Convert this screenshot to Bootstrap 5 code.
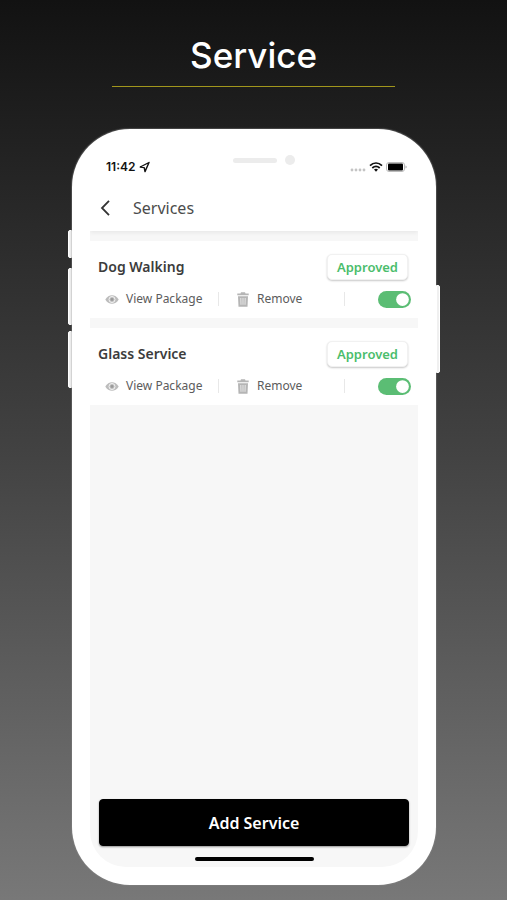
<!DOCTYPE html>
<html lang="en">
<head>
<meta charset="utf-8">
<meta name="viewport" content="width=device-width, initial-scale=1">
<title>Services</title>
<link href="https://cdn.jsdelivr.net/npm/bootstrap@5.3.0/dist/css/bootstrap.min.css" rel="stylesheet">
<style>
body { font-family: "Noto Sans", "Liberation Sans", sans-serif; background: linear-gradient(#121212, #424242 50%, #787878); color: #444; }
.page-title { font-family: Inter, "Liberation Sans", sans-serif; font-size: 35px; line-height: 44px; font-weight: 500; }
.title-block { padding: 33px 0 42px; }
.title-inner { width: 56%; padding-bottom: 9px; border-bottom: 1px solid #a1961c; }
.device { margin: 0 67px 15px 68px; }
.rail { width: 4px; }
.rail span { background: #f0f0f0; border: 1px solid #fff; }
.rail-left { padding-top: 101px; }
.rail-right { padding-top: 156px; }
.key-s { height: 28px; margin-bottom: 10px; border-radius: 2px 0 0 2px; }
.key-l { height: 57px; margin-bottom: 6px; border-radius: 2px 0 0 2px; }
.key-r { height: 88px; border-radius: 0 2px 2px 0; }
.shell { background: #fff; border-radius: 58px; padding: 18px; box-shadow: 0 0 1px 1px #8886; min-width: 0; }
.screen { background: #f7f7f7; border-radius: 0 0 36px 36px; }
.top-area { background: #fff; box-shadow: 0 2px 4px #0000000f; clip-path: inset(0 0 -10px 0); }
.status { display: grid; grid-template-columns: 1fr auto 1fr; padding: 8px 11px 0 16px; height: 38px; }
.clock { font-family: Inter, "Liberation Sans", sans-serif; font-size: 12px; line-height: 16px; font-weight: 600; color: #111; padding-top: 4px; }
.notch { margin-left: 15px; height: 10px; }
.speaker { width: 44px; height: 5px; border-radius: 3px; background: #ececec; }
.lens { width: 10px; height: 10px; border-radius: 50%; background: #ececec; }
.signals { height: 16px; margin-top: 4px; }
.app-bar { height: 46px; padding-left: 9px; gap: 20px; }
.app-title { font-size: 16px; line-height: 20px; color: #4c4c4c; }
.services { padding-top: 10px; gap: 10px; }
.service { background: #fff; height: 77px; padding: 13px 7px 0 8px; }
.service-name { font-size: 14px; line-height: 20px; font-weight: 600; color: #3c3c3c; }
.approved { width: 81px; height: 26px; margin-right: 3px; border-radius: 5px; font-size: 13px; line-height: 24px; font-weight: 600; color: #4bbd6c; background: #fff; border: 1px solid #f1f1f1; box-shadow: 0 1px 2px #00000038; }
.actions { height: 14px; margin-top: 12px; }
.action { font-size: 12px; line-height: 14px; color: #5c5c5c; background: none; border-right: 1px solid #e8e8e8 !important; height: 14px; }
.view { width: 121px; padding: 0 0 0 7px; gap: 7px; }
.trash { width: 126px; padding: 0 0 0 18px; gap: 8px; }
.form-switch.toggle-wrap { min-height: 0; }
.form-switch .toggle { width: 33px; height: 17px; margin: 0; border: 0; display: block; }
.form-switch .toggle:checked { background-color: #5bbd74; }
.footer-area { padding: 0 9px 6px; }
.add { height: 47px; border-radius: 4px; font-size: 16px; line-height: 20px; font-weight: 600; box-shadow: 0 1px 2px #0006; --bs-btn-bg: #000; --bs-btn-border-color: #000; }
.home-bar { width: 119px; height: 4px; border-radius: 2px; background: #000; margin-top: 11px; }
</style>
<script src="https://cdn.jsdelivr.net/npm/bootstrap@5.3.0/dist/js/bootstrap.bundle.min.js"></script>
</head>
<body class="min-vh-100 d-flex flex-column">
<header class="title-block">
  <div class="title-inner mx-auto text-center"><h1 class="page-title text-white m-0">Service</h1></div>
</header>
<main class="device d-flex flex-grow-1">
  <div class="rail rail-left d-flex flex-column"><span class="key-s"></span><span class="key-l"></span><span class="key-l"></span></div>
  <div class="shell flex-grow-1 d-flex flex-column">
    <div class="screen flex-grow-1 d-flex flex-column">
      <div class="top-area">
        <div class="status">
          <div class="clock d-flex">11:42
            <svg class="ms-1" width="11" height="16" viewBox="0 0 11 16" fill="none" stroke="#111" stroke-width="1.4" stroke-linejoin="round" aria-hidden="true"><path d="M10 3.500 1.200 8 5.200 8.600 6 12.600z"/></svg>
          </div>
          <div class="notch d-flex align-items-center"><span class="speaker"></span><span class="lens ms-2"></span></div>
          <div class="signals d-flex justify-content-end align-items-center">
            <svg width="57" height="12" viewBox="0 0 57 12" aria-hidden="true">
              <g fill="#c4c4c4"><circle cx="2" cy="9" r="1.400"/><circle cx="6" cy="9" r="1.400"/><circle cx="10" cy="9" r="1.400"/><circle cx="14" cy="9" r="1.400"/></g>
              <g fill="none" stroke="#111" stroke-width="1.800"><path d="M20 4.600c3.600-3.300 8.400-3.300 12 0M22.300 7c2.200-2 5.200-2 7.400 0"/></g>
              <path d="M24 8.500c1.200-1 2.800-1 4 0l-2 2.200z" fill="#111"/>
              <rect x="36.500" y="1.500" width="18" height="9" rx="2.500" fill="none" stroke="#bbb"/><rect x="38" y="2.500" width="15" height="7" rx="1" fill="#000"/><path d="M55.500 4.500c1.500.5 1.500 2.500 0 3z" fill="#aaa"/>
            </svg>
          </div>
        </div>
        <div class="app-bar d-flex align-items-center">
          <button class="btn p-0 border-0 d-flex" type="button" aria-label="Back"><svg width="14" height="16" viewBox="0 0 14 16" fill="none" stroke="#333" stroke-width="1.800"><path d="M10 .8 3 8l7 7.200"/></svg></button>
          <h2 class="app-title fw-normal m-0">Services</h2>
        </div>
      </div>
      <div class="services d-flex flex-column">
        <section class="service">
          <div class="d-flex justify-content-between align-items-center"><h3 class="service-name m-0">Dog Walking</h3><span class="approved text-center">Approved</span></div>
          <div class="actions d-flex align-items-center">
            <button type="button" class="action view border-0 d-flex align-items-center"><svg width="14" height="11" viewBox="0 0 14 11" aria-hidden="true"><path d="M.3 5.500C3.500-.3 10.500-.3 13.700 5.500 10.500 11.300 3.500 11.300.3 5.500z" fill="#bcbcbc"/><circle cx="7" cy="5.500" r="3" fill="#bcbcbc" stroke="#f4f4f4"/><circle cx="7" cy="5.500" r="1.400" fill="#999"/></svg>View Package</button>
            <button type="button" class="action trash border-0 d-flex align-items-center"><svg width="12" height="15" viewBox="0 0 12 15" fill="#b5b5b5" aria-hidden="true"><path d="M.3 1.500h3.200L4 .3h4l.5 1.200h3.200v1.700H.3zM1 4.200h10l-.5 10.500h-9z"/><path d="M3.800 6l.2 6.800M6 6v6.800M8.200 6 8 12.800" stroke="#eee" stroke-width=".9"/></svg>Remove</button>
            <div class="form-check form-switch toggle-wrap p-0 m-0 ms-auto"><input class="form-check-input toggle float-none" type="checkbox" role="switch" aria-label="Dog Walking enabled" checked></div>
          </div>
        </section>
        <section class="service">
          <div class="d-flex justify-content-between align-items-center"><h3 class="service-name m-0">Glass Service</h3><span class="approved text-center">Approved</span></div>
          <div class="actions d-flex align-items-center">
            <button type="button" class="action view border-0 d-flex align-items-center"><svg width="14" height="11" viewBox="0 0 14 11" aria-hidden="true"><path d="M.3 5.500C3.500-.3 10.500-.3 13.700 5.500 10.500 11.300 3.500 11.300.3 5.500z" fill="#bcbcbc"/><circle cx="7" cy="5.500" r="3" fill="#bcbcbc" stroke="#f4f4f4"/><circle cx="7" cy="5.500" r="1.400" fill="#999"/></svg>View Package</button>
            <button type="button" class="action trash border-0 d-flex align-items-center"><svg width="12" height="15" viewBox="0 0 12 15" fill="#b5b5b5" aria-hidden="true"><path d="M.3 1.500h3.200L4 .3h4l.5 1.200h3.200v1.700H.3zM1 4.200h10l-.5 10.500h-9z"/><path d="M3.800 6l.2 6.800M6 6v6.800M8.200 6 8 12.800" stroke="#eee" stroke-width=".9"/></svg>Remove</button>
            <div class="form-check form-switch toggle-wrap p-0 m-0 ms-auto"><input class="form-check-input toggle float-none" type="checkbox" role="switch" aria-label="Glass Service enabled" checked></div>
          </div>
        </section>
      </div>
      <div class="footer-area mt-auto">
        <button type="button" class="btn btn-dark add w-100">Add Service</button>
        <div class="home-bar mx-auto"></div>
      </div>
    </div>
  </div>
  <div class="rail rail-right d-flex flex-column"><span class="key-r"></span></div>
</main>
</body>
</html>
